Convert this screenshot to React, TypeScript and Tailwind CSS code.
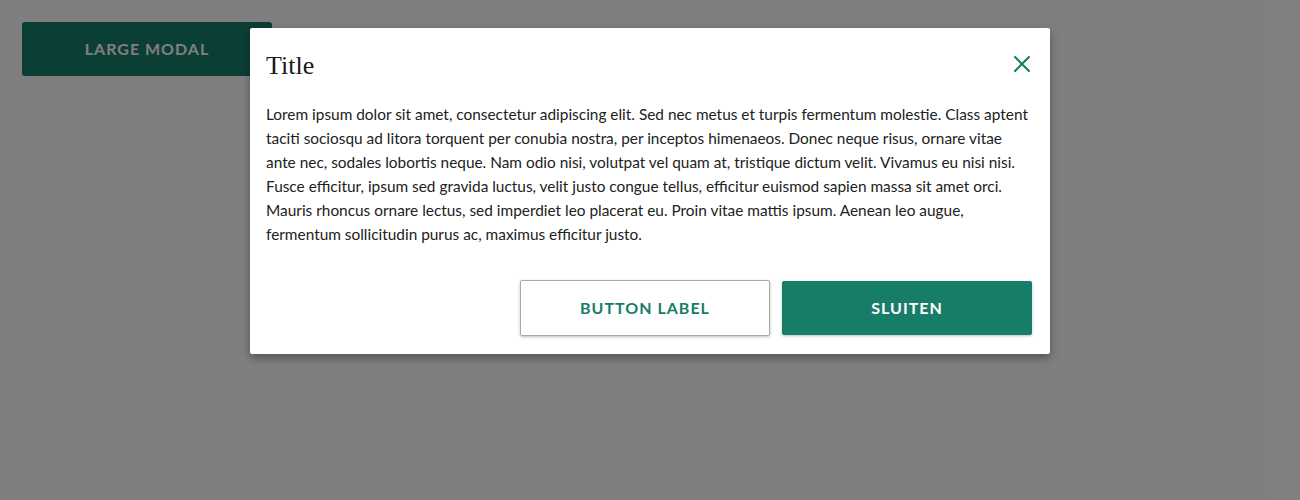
import { X } from 'lucide-react';

const body =
  'Lorem ipsum dolor sit amet, consectetur adipiscing elit. Sed nec metus et turpis fermentum molestie. Class aptent taciti sociosqu ad litora torquent per conubia nostra, per inceptos himenaeos. Donec neque risus, ornare vitae ante nec, sodales lobortis neque. Nam odio nisi, volutpat vel quam at, tristique dictum velit. Vivamus eu nisi nisi. Fusce efficitur, ipsum sed gravida luctus, velit justo congue tellus, efficitur euismod sapien massa sit amet orci. Mauris rhoncus ornare lectus, sed imperdiet leo placerat eu. Proin vitae mattis ipsum. Aenean leo augue, fermentum sollicitudin purus ac, maximus efficitur justo.';

export default function App() {
  return (
    <div className="relative h-[500px] w-[1300px] bg-white font-['Lato',sans-serif]">
      <div className="p-[22px]">
        <button className="h-[54px] w-[250px] rounded-[3px] bg-[#177d68] text-[16px] font-bold tracking-[1px] text-white">
          LARGE MODAL
        </button>
      </div>

      <div className="absolute inset-0 flex items-start justify-center bg-black/50 pt-[28px]">
        <div className="flex w-[800px] flex-col rounded-[2px] bg-white px-[16px] pb-[18px] pt-[18px] shadow-[0_4px_10px_rgba(0,0,0,0.35)]">
          <div className="flex items-start justify-between">
            <h2 className="font-['Liberation_Serif',serif] text-[26px] leading-[40px] text-[#1a1a1a]">Title</h2>
            <button className="-mr-[2px] mt-[4px] text-[#177d68]">
              <X size={28} strokeWidth={1.8} />
            </button>
          </div>
          <p className="mt-[16px] text-[15.4px] leading-[24px] text-[#222]">{body}</p>
          <div className="mt-[34px] flex justify-end gap-[12px] pr-[2px]">
            <button className="h-[56px] w-[250px] rounded-[2px] border border-[#aaa] bg-white text-[16px] font-bold tracking-[1px] text-[#177d68] shadow-[0_1px_3px_rgba(0,0,0,0.25)]">
              BUTTON LABEL
            </button>
            <button className="mt-[1px] h-[54px] w-[250px] rounded-[2px] bg-[#177d68] text-[16px] font-bold tracking-[1px] text-white shadow-[0_1px_3px_rgba(0,0,0,0.25)]">
              SLUITEN
            </button>
          </div>
        </div>
      </div>
    </div>
  );
}
